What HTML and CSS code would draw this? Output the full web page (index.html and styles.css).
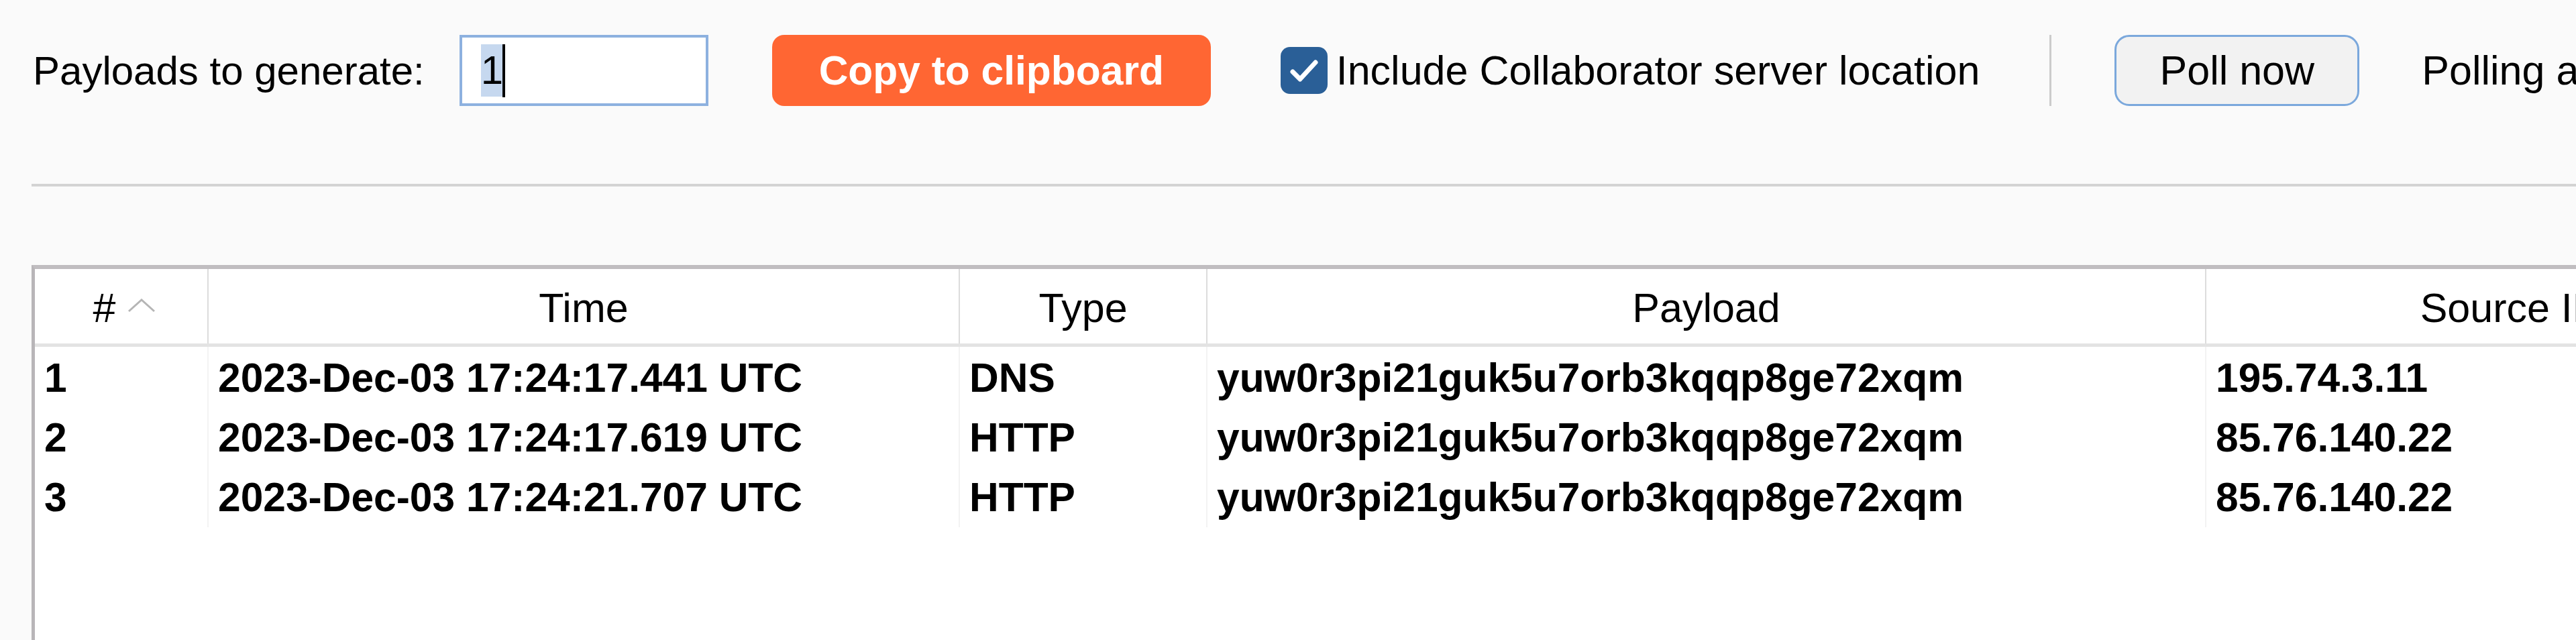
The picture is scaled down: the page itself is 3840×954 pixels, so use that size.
FILE: index.html
```html
<!DOCTYPE html>
<html>
<head>
<meta charset="utf-8">
<link rel="stylesheet" href="styles.css">
</head>
<body>
<div class="page">
  <div class="toolbar">
    <span class="field-label">Payloads to generate:</span>
    <div class="num-input"><span class="sel">1</span><span class="caret"></span></div>
    <button class="btn-copy">Copy to clipboard</button>
    <label class="check">
      <span class="box"><svg width="70" height="70" viewBox="0 0 70 70"><path d="M18 37 L29 48 L52 23" fill="none" stroke="#fff" stroke-width="7" stroke-linecap="round" stroke-linejoin="round"/></svg></span>
      <span class="check-text">Include Collaborator server location</span>
    </label>
    <span class="vsep"></span>
    <button class="btn-poll">Poll now</button>
    <span class="polling">Polling automatically in background</span>
  </div>
  <div class="divider"></div>
  <div class="table">
    <div class="thead">
      <div class="th th-num"><span>#</span><svg class="sort" width="42" height="22" viewBox="0 0 42 22"><path d="M2 20 L21 3 L40 20" fill="none" stroke="#b5b5b5" stroke-width="3"/></svg></div>
      <div class="th">Time</div>
      <div class="th">Type</div>
      <div class="th">Payload</div>
      <div class="th">Source IP address</div>
      <div class="th">Comment</div>
    </div>
    <div class="tbody">
      <div class="tr">
        <div class="td">1</div>
        <div class="td">2023-Dec-03 17:24:17.441 UTC</div>
        <div class="td">DNS</div>
        <div class="td">yuw0r3pi21guk5u7orb3kqqp8ge72xqm</div>
        <div class="td">195.74.3.11</div>
        <div class="td"></div>
      </div>
      <div class="tr">
        <div class="td">2</div>
        <div class="td">2023-Dec-03 17:24:17.619 UTC</div>
        <div class="td">HTTP</div>
        <div class="td">yuw0r3pi21guk5u7orb3kqqp8ge72xqm</div>
        <div class="td">85.76.140.22</div>
        <div class="td"></div>
      </div>
      <div class="tr">
        <div class="td">3</div>
        <div class="td">2023-Dec-03 17:24:21.707 UTC</div>
        <div class="td">HTTP</div>
        <div class="td">yuw0r3pi21guk5u7orb3kqqp8ge72xqm</div>
        <div class="td">85.76.140.22</div>
        <div class="td"></div>
      </div>
    </div>
  </div>
</div>
</body>
</html>
```
FILE: styles.css
```css
html, body {
  margin: 0;
  padding: 0;
  height: 954px;
  overflow: hidden;
  background: #fafafa;
}

body {
  font-family: "Liberation Sans", Arial, sans-serif;
  font-size: 61px;
  color: #000;
}

.page {
  display: flex;
  flex-direction: column;
  height: 954px;
  width: 3840px;
  overflow: hidden;
}

.toolbar {
  display: flex;
  align-items: center;
  height: 106px;
  margin-top: 52px;
  padding-left: 49px;
  white-space: nowrap;
  flex: none;
}

.field-label {
  line-height: 69px;
  font-size: 60px;
}

.num-input {
  margin-left: 52px;
  width: 371px;
  height: 106px;
  box-sizing: border-box;
  border: 4px solid #8db1df;
  background: #fff;
  display: flex;
  align-items: center;
  padding-left: 28px;
  flex: none;
}

.sel {
  display: inline-block;
  background: #c6d8ef;
  height: 78px;
  line-height: 78px;
  width: 32px;
  font-size: 60px;
}

.caret {
  display: inline-block;
  width: 4px;
  height: 79px;
  background: #000;
}

.btn-copy {
  margin-left: 95px;
  width: 654px;
  height: 106px;
  flex: none;
  border: none;
  border-radius: 18px;
  background: #ff6633;
  color: #fff;
  font-family: "Liberation Sans", Arial, sans-serif;
  font-weight: bold;
  font-size: 60.5px;
  padding: 0;
}

.check {
  margin-left: 104px;
  display: flex;
  align-items: center;
}

.box {
  width: 70px;
  height: 70px;
  border-radius: 14px;
  background: #2a5f97;
  margin-right: 13px;
  display: flex;
  flex: none;
}

.vsep {
  width: 3px;
  height: 106px;
  background: #cbcbcb;
  margin-left: 104px;
  flex: none;
}

.btn-poll {
  margin-left: 94px;
  width: 365px;
  height: 106px;
  flex: none;
  box-sizing: border-box;
  border: 3px solid #7ba8dc;
  border-radius: 22px;
  background: #f2f2f2;
  color: #000;
  font-family: "Liberation Sans", Arial, sans-serif;
  font-size: 61px;
  padding: 0;
}

.polling {
  margin-left: 93px;
}

.divider {
  flex: none;
  margin-top: 116px;
  margin-left: 47px;
  height: 4px;
  background: #d3d3d3;
}

.table {
  flex: 1;
  margin-top: 117px;
  margin-left: 47px;
  border-left: 5px solid #b8b5b8;
  border-top: 6px solid #c0bdc0;
  background: #fff;
  min-width: 0;
}

.thead,
.tr {
  display: grid;
  grid-template-columns: 259px 1120px 369px 1489px 1140px 900px;
}

.thead {
  height: 111px;
  border-bottom: 5px solid #e3e3e3;
}

.th {
  display: flex;
  align-items: center;
  justify-content: center;
  border-right: 2px solid #dcdcdc;
  white-space: nowrap;
  padding-top: 4px;
  box-sizing: border-box;
}

.th-num {
  padding-left: 10px;
}

.sort {
  margin-left: 18px;
  margin-top: -8px;
}

.tr {
  height: 89px;
}

.td {
  border-right: 2px solid #f3f3f3;
  padding-left: 14px;
  font-weight: bold;
  font-size: 60.5px;
  line-height: 89px;
  padding-top: 2px;
  box-sizing: border-box;
  white-space: nowrap;
}
```
